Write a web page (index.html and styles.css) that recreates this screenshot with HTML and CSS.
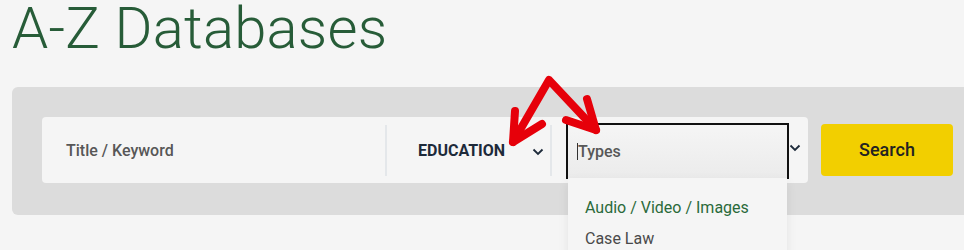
FILE: index.html
```html
<!DOCTYPE html>
<html lang="en">
<head>
<meta charset="utf-8">
<title>A-Z Databases</title>
<link rel="stylesheet" href="styles.css">
</head>
<body>
<h1 class="title">A-Z Databases</h1>
<div class="panel">
  <div class="bar">
    <div class="fields">
      <div class="field keyword"><span class="placeholder">Title / Keyword</span></div>
      <div class="divider"></div>
      <div class="field subject">
        <span class="subject-label">EDUCATION</span>
        <svg class="chev" width="12" height="8" viewBox="0 0 12 8"><path d="M1.5 1.5 L6 6 L10.5 1.5" fill="none" stroke="#1d2a3a" stroke-width="1.8"/></svg>
      </div>
      <div class="divider"></div>
      <div class="field types">
        <div class="types-box">
          <span class="caret"></span><span class="placeholder">Types</span>
          <ul class="menu">
            <li class="menu-item active">Audio / Video / Images</li>
            <li class="menu-item">Case Law</li>
          </ul>
        </div>
        <svg class="chev chev-types" width="12" height="8" viewBox="0 0 12 8"><path d="M1.5 1.5 L6 6 L10.5 1.5" fill="none" stroke="#1d2a3a" stroke-width="1.8"/></svg>
      </div>
    </div>
    <button class="search">Search</button>
  </div>
</div>
<svg class="arrows" width="964" height="250" viewBox="0 0 964 250">
  <g fill="none" stroke="#e6000a" stroke-width="8" stroke-linecap="round" stroke-linejoin="round">
    <path d="M513 142 L549 80 L596 130"/>
    <path d="M515 111 L513 142 L542 124"/>
    <path d="M587 99 L596 130 L566 120"/>
  </g>
</svg>
</body>
</html>
```

FILE: styles.css
```css
html, body {
  margin: 0;
  padding: 0;
}
body {
  background: #f5f5f5;
  font-family: Roboto, "Liberation Sans", Arial, sans-serif;
  width: 964px;
  height: 250px;
  overflow: hidden;
  position: relative;
}
.title {
  margin: 0 0 31px 0;
  padding-left: 12px;
  font-size: 58px;
  line-height: 56px;
  font-weight: 300;
  color: #275c38;
  letter-spacing: 0.2px;
  white-space: nowrap;
}
.panel {
  margin-left: 12px;
  width: 980px;
  height: 128px;
  box-sizing: border-box;
  background: #dcdcdc;
  border-radius: 6px;
  padding: 30px 0 0 30px;
}
.bar {
  display: flex;
  align-items: flex-start;
  gap: 13px;
}
.fields {
  display: flex;
  align-items: center;
  width: 766px;
  height: 66px;
  background: #f5f5f5;
  border-radius: 4px;
}
.field {
  height: 100%;
  display: flex;
  align-items: center;
  box-sizing: border-box;
}
.placeholder {
  font-size: 16px;
  font-weight: 500;
  color: #575757;
}
.keyword {
  width: 343px;
  padding-left: 24px;
}
.divider {
  width: 2px;
  height: 51px;
  background: #e4e7ea;
}
.subject {
  width: 163px;
  padding-left: 31px;
}
.subject-label {
  font-size: 16px;
  font-weight: 700;
  color: #1d2a3a;
}
.chev {
  display: block;
}
.subject .chev {
  margin-left: 27px;
  margin-top: 4px;
}
.types {
  flex: 1;
  padding-left: 14px;
  position: relative;
  align-items: flex-start;
}
.types-box {
  position: relative;
  margin-top: 6px;
  width: 223px;
  height: 56px;
  box-sizing: border-box;
  border: 2px solid #111;
  border-bottom: none;
  background: linear-gradient(#f5f5f5, #ebebeb);
  display: flex;
  align-items: center;
  padding-left: 9px;
  padding-bottom: 2px;
}
.caret {
  width: 1px;
  height: 17px;
  background: #333;
}
.chev-types {
  margin-top: 27px;
}
.menu {
  position: absolute;
  left: 0;
  right: 0;
  top: 53px;
  margin: 0;
  padding: 14px 0 0 17px;
  list-style: none;
  background: #f5f5f5;
  height: 80px;
  box-shadow: 0 4px 10px rgba(0, 0, 0, 0.08);
}
.menu-item {
  font-size: 16px;
  line-height: 31px;
  color: #4a4a4a;
}
.menu-item.active {
  color: #2a6a3a;
}
.search {
  margin-top: 7px;
  width: 132px;
  height: 52px;
  border: none;
  border-radius: 4px;
  background: #f2cf00;
  font-family: Roboto, "Liberation Sans", Arial, sans-serif;
  font-size: 18px;
  font-weight: 500;
  color: #222;
  padding: 0 0 2px 0;
}
.arrows {
  position: absolute;
  left: 0;
  top: 0;
  pointer-events: none;
}
```
